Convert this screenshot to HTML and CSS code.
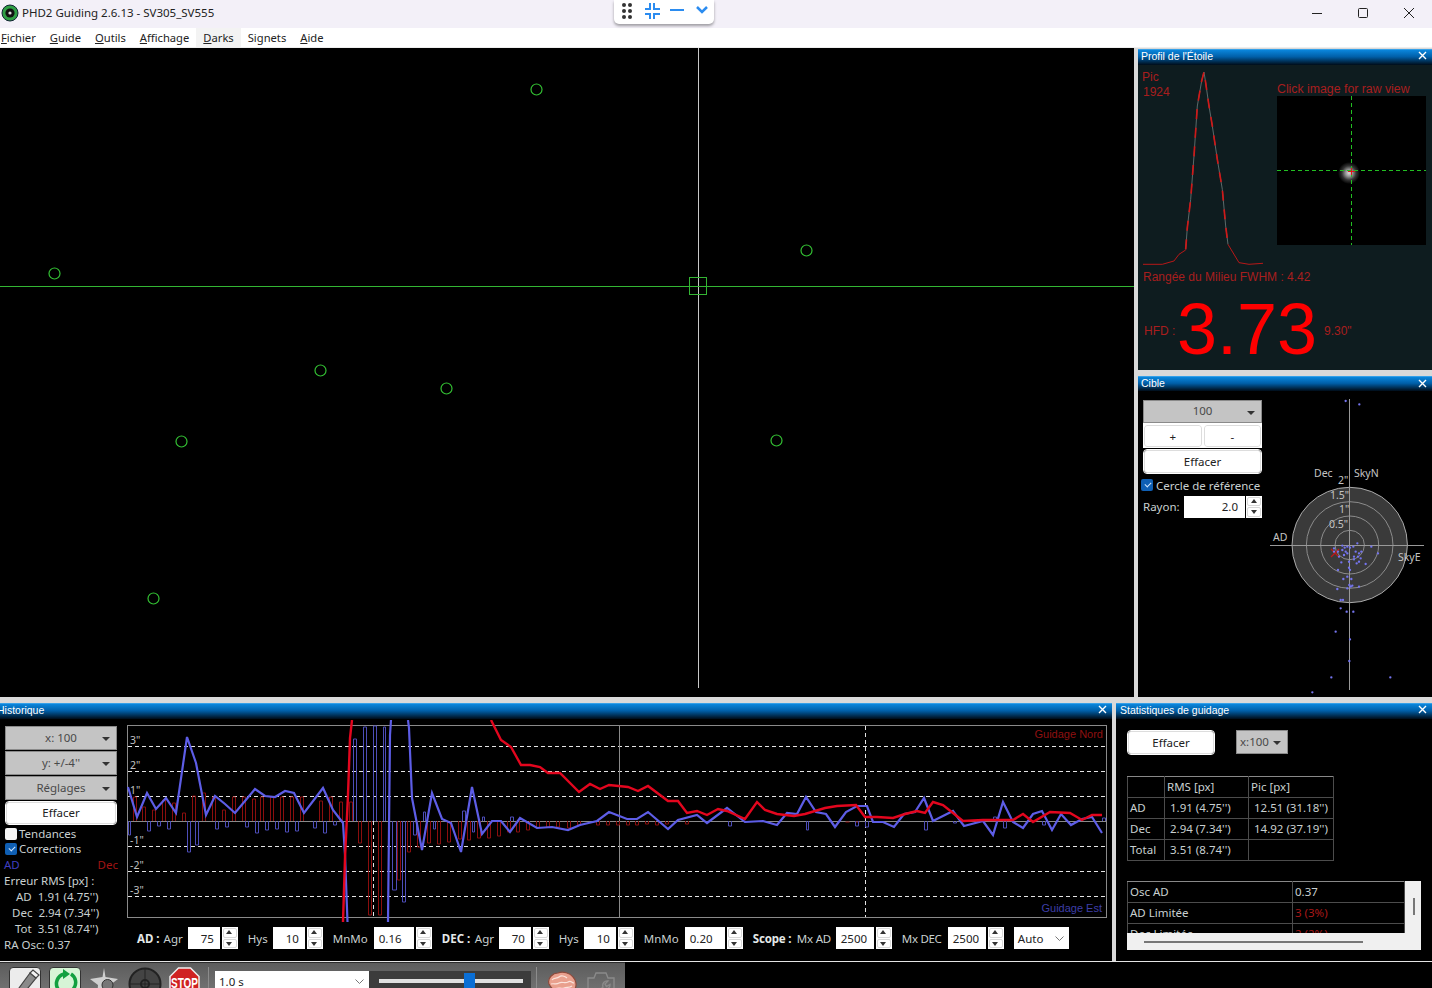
FILE: index.html
```html
<!DOCTYPE html>
<html lang="fr">
<head>
<meta charset="utf-8">
<title>PHD2 Guiding</title>
<link rel="stylesheet" href="styles.css">
</head>
<body>
<div class="app">
  <header class="titlebar">
    <svg class="appicon" viewBox="0 0 18 18" width="18" height="18"><circle cx="9" cy="9" r="8" fill="#2f9e44" stroke="#123" stroke-width="1"/><circle cx="9" cy="9" r="4.6" fill="#111"/><circle cx="9" cy="9" r="1.6" fill="#ddd"/></svg>
    <span class="apptitle">PHD2 Guiding 2.6.13 - SV305_SV555</span>
    <div class="winbtns">
      <svg viewBox="0 0 46 24" width="46" height="24"><path d="M18 12.5h10" stroke="#222" fill="none"/></svg>
      <svg viewBox="0 0 46 24" width="46" height="24"><rect x="18.500" y="7.500" width="9" height="9" rx="1" stroke="#222" fill="none"/></svg>
      <svg viewBox="0 0 46 24" width="46" height="24"><path d="M18 7l10 10M28 7l-10 10" stroke="#222" fill="none"/></svg>
    </div>
    <div class="pill">
      <svg viewBox="614 0 100 24" width="100" height="24">
        <g fill="#333"><circle cx="624" cy="5" r="2"/><circle cx="630" cy="5" r="2"/><circle cx="624" cy="11" r="2"/><circle cx="630" cy="11" r="2"/><circle cx="624" cy="17" r="2"/><circle cx="630" cy="17" r="2"/></g>
        <g stroke="#2b8cf0" stroke-width="2" fill="none"><path d="M645 9h5V3M660 9h-6V3M645 14h5v5M660 14h-6v5"/><path d="M670 10h14"/><path d="M697 7l5 5 5-5" stroke-width="2.500"/></g>
      </svg>
    </div>
  </header>
  <nav class="menubar">
    <span class="mi"><u>F</u>ichier</span><span class="mi"><u>G</u>uide</span><span class="mi"><u>O</u>utils</span><span class="mi"><u>A</u>ffichage</span><span class="mi mi-hover"><u>D</u>arks</span><span class="mi">Signets</span><span class="mi"><u>A</u>ide</span>
  </nav>

  <main class="toprow">
    <div class="viewer">
      <svg class="fill" viewBox="0 48 1134 649">
        <path d="M698.500 48V688" stroke="#c8c8c8" fill="none"/>
        <path d="M0 286.500H1134" stroke="#33b533" fill="none"/>
        <rect x="689.500" y="277.500" width="17" height="17" stroke="#33b533" fill="none"/>
        <g stroke="#33c033" fill="none" stroke-width="1.200">
          <circle cx="536.500" cy="89.500" r="5.500"/><circle cx="806.500" cy="250.500" r="5.500"/><circle cx="54.500" cy="273.500" r="5.500"/><circle cx="320.500" cy="370.500" r="5.500"/><circle cx="446.500" cy="388.500" r="5.500"/><circle cx="181.500" cy="441.500" r="5.500"/><circle cx="776.500" cy="440.500" r="5.500"/><circle cx="153.500" cy="598.500" r="5.500"/>
        </g>
      </svg>
    </div>
    <aside class="rightcol">
      <section class="panel panel-profile">
        <div class="ptitle"><span>Profil de l'Étoile</span><svg class="px" viewBox="0 0 9 9" width="9" height="9"><path d="M1 1l7 7M8 1L1 8" stroke="#fff" stroke-width="1.400"/></svg></div>
        <svg class="fill" viewBox="1138 65 294 305">
          <defs><radialGradient id="star"><stop offset="0" stop-color="#ddd"/><stop offset=".3" stop-color="#999"/><stop offset=".65" stop-color="#333"/><stop offset="1" stop-color="#000"/></radialGradient></defs>
          <g class="redtext">
            <text x="1142" y="81">Pic</text><text x="1143" y="96">1924</text>
            <text class="wide" x="1277" y="93">Click image for raw view</text>
            <text x="1143" y="281">Rangée du Milieu FWHM : 4.42</text>
            <text x="1144" y="335">HFD :</text><text x="1324" y="335">9.30"</text>
          </g>
          <text class="hfd" x="1177" y="354">3.73</text>
          <g transform="translate(1134 46) scale(.3333)" fill="none">
            <polyline stroke="#5a6a6a" stroke-width="3" points="155,610 160,545 170,460 180,330 190,180 203,105 210,78 215,110 225,180 235,240 250,340 265,430 275,540 282,595"/>
            <polyline stroke="#d01818" stroke-width="5" stroke-dasharray="30 26" points="155,610 160,545 170,460 180,330 190,180 203,105 210,78 215,110 225,180 235,240 250,340 265,430 275,540 282,595"/>
            <polyline stroke="#b81818" stroke-width="3" points="27,655 85,655 120,645 135,625 155,612"/>
            <polyline stroke="#b81818" stroke-width="3" points="282,595 315,650 345,655 387,652"/>
          </g>
          <rect x="1277" y="96" width="149" height="149" fill="#000"/>
          <circle cx="1349" cy="173" r="11" fill="url(#star)"/>
          <path d="M1277 170.500H1426M1351.500 96V245" stroke="#22c022" stroke-dasharray="4 3" fill="none"/>
          <path d="M1348 171.500h7M1351.500 168v7" stroke="#e01818" fill="none"/>
        </svg>
      </section>
      <section class="panel panel-target">
        <div class="ptitle"><span>Cible</span><svg class="px" viewBox="0 0 9 9" width="9" height="9"><path d="M1 1l7 7M8 1L1 8" stroke="#fff" stroke-width="1.400"/></svg></div>
        <div class="targetbody">
          <div class="targetside">
            <div class="drop drop-target"><span>100</span><i class="caret"></i></div>
            <div class="btnpair"><button class="btn">+</button><button class="btn">-</button></div>
            <button class="btn btn-clear">Effacer</button>
            <label class="chk chk-ref"><i class="box on"></i>Cercle de référence</label>
            <div class="radius"><span>Rayon:</span><span class="input input-radius">2.0</span><span class="spin spin-wide"><i class="up"></i><i class="dn"></i></span></div>
          </div>
          <svg class="plot" viewBox="1262 391 170 306" width="170" height="306">
            <circle cx="1349.700" cy="545" r="57.700" fill="#3a3a3a" stroke="#aaa"/>
            <g fill="none" stroke="#8c8c8c"><circle cx="1349.700" cy="545" r="43.300"/><circle cx="1349.700" cy="545" r="29"/><circle cx="1349.700" cy="545" r="14.700"/></g>
            <path d="M1270 545.500H1424M1349.500 399V690" stroke="#999" fill="none"/>
            <path d="M1331 549l8 8M1339 549l-8 8" stroke="#c01818" fill="none" stroke-width="1.200"/>
            <g class="plottext">
              <text x="1314" y="477">Dec</text><text x="1354" y="477">SkyN</text>
              <text x="1338" y="484">2"</text><text x="1330" y="499">1.5"</text><text x="1339" y="513">1"</text><text x="1329" y="528">0.5"</text>
              <text x="1273" y="541">AD</text><text x="1398" y="561">SkyE</text>
            </g>
            <g transform="translate(1134 375) scale(.3333)"><path fill="none" stroke="#7474ee" stroke-width="7" stroke-linecap="round" d="M635 78h.1M676 88h.1M620 700h.1M658 710h.1M638 710h.1M605 770h.1M648 793h.1M646 858h.1M592 907h.1M769 907h.1M535 952h.1M620 675h.1M627 675h.1M625 512h.1M632 518h.1M640 515h.1M648 518h.1M658 515h.1M670 505h.1M712 515h.1M600 520h.1M612 530h.1M625 525h.1M635 530h.1M615 545h.1M630 540h.1M640 535h.1M665 530h.1M675 535h.1M682 530h.1M672 545h.1M660 545h.1M680 550h.1M732 535h.1M695 567h.1M668 565h.1M675 560h.1M622 562h.1M645 560h.1M612 585h.1M645 578h.1M648 585h.1M660 553h.1M628 612h.1M640 605h.1M652 612h.1M646 630h.1M650 635h.1M675 635h.1M655 632h.1M640 640h.1M610 642h.1M600 530h.1"/></g>
          </svg>
        </div>
      </section>
    </aside>
  </main>

  <div class="bottomrow">
    <section class="panel panel-history">
      <div class="ptitle ptitle-hist"><span>Historique</span><svg class="px" viewBox="0 0 9 9" width="9" height="9"><path d="M1 1l7 7M8 1L1 8" stroke="#fff" stroke-width="1.400"/></svg></div>
      <div class="histbody">
        <div class="histside">
          <div class="drop"><span>x: 100</span><i class="caret"></i></div>
          <div class="drop"><span>y: +/-4''</span><i class="caret"></i></div>
          <div class="drop"><span>Réglages</span><i class="caret"></i></div>
          <button class="btn btn-hist">Effacer</button>
          <label class="chk"><i class="box"></i>Tendances</label>
          <label class="chk"><i class="box on"></i>Corrections</label>
          <div class="legend"><span class="c-ad">AD</span><span class="c-dec">Dec</span></div>
          <div class="stat">Erreur RMS [px] :</div>
          <div class="stat stat-ad">AD&nbsp; 1.91 (4.75'')</div>
          <div class="stat stat-dec">Dec&nbsp; 2.94 (7.34'')</div>
          <div class="stat stat-tot">Tot&nbsp; 3.51 (8.74'')</div>
          <div class="stat">RA Osc: 0.37</div>
        </div>
        <div class="histmain">
          <svg class="graph" viewBox="127 720 980 202" width="980" height="202">
            <rect x="127.500" y="725.500" width="979" height="192" fill="none" stroke="#8a8a8a"/>
            <path d="M128 746.500H1106M128 771.500H1106M128 796.500H1106M128 846.500H1106M128 871.500H1106M128 896.500H1106" stroke="#e4e4e4" stroke-dasharray="4 3" fill="none"/>
            <path d="M128 821.500H1106" stroke="#8a8a8a" fill="none"/>
            <path d="M619.500 726V917" stroke="#8a8a8a" fill="none"/>
            <path d="M865.500 726V917M373.500 821V917" stroke="#e4e4e4" stroke-dasharray="4 3" fill="none"/>
            <path fill="none" stroke="#8a0e0e" d="M133.500 821V797h3v24M142.500 821V807h3v14M152.500 821V810h3v11M162.500 821V800h3v21M172.500 821V803h3v18M182.500 821V813h3v8M192.500 821V796h3v25M202.500 821V793h3v28M212.500 821V797h3v24M222.500 821V810h3v11M232.500 821V797h3v24M242.500 821V797h3v24M252.500 821V799h3v22M260.500 821V797h3v24M270.500 821V797h3v24M280.500 821V797h3v24M290.500 821V797h3v24M300.500 821V797h3v24M319.500 821V801h3v20M329.500 821V797h3v24M339.500 821V802h3v19M349.500 821V802h3v19M358.500 821V843h3V821M368.500 821V915h3V821M378.500 821V915h3V821M397.500 821V880h3V821M407.500 821V852h3V821M417.500 821V847h3V821M427.500 821V843h3V821M437.500 821V844h3V821M447.500 821V842h3V821M458.500 821V839h3V821M467.500 821V840h3V821M477.500 821V838h3V821M487.500 821V838h3V821M497.500 821V836h3V821M507.500 821V832h3V821M516.500 821V832h3V821M526.500 821V830h3V821M536.500 821V828h3V821M546.500 821V827h3V821M556.500 821V827h3V821M567.500 821V828h3V821M577.500 821V825h3V821M596.500 821V825h3V821M606.500 821V825h3V821M616.500 821V825h3V821M626.500 821V825h3V821M635.500 821V825h3V821M645.500 821V824h3V821M655.500 821V825h3V821M665.500 821V824h3V821M685.500 821V824h3V821M845.500 822h4M855.500 822h4M975.500 822h4"/>
            <path fill="none" stroke="#4d4db8" d="M128.500 821V835h2V821M147.500 821V831h3V821M157.500 821V826h3V821M167.500 821V829h3V821M187.500 821V852h3V821M195.500 821V845h3V821M215.500 821V829h3V821M225.500 821V827h3V821M245.500 821V827h3V821M255.500 821V833h3V821M265.500 821V830h3V821M275.500 821V829h3V821M285.500 821V832h3V821M295.500 821V831h3V821M313.500 821V828h3V821M323.500 821V833h3V821M333.500 821V825h3V821M353.500 821V739h3v82M363.500 821V727h3v94M373.500 821V726h3v95M383.500 821V727h2v94M392.500 821V890h4V821M402.500 821V902h3V821M413.500 821V835h3V821M423.500 821V812h2v9M433.500 821V829h2V821M462.500 821V811h3v10M472.500 821V832h2V821M482.500 821V817h2v4M510.500 821V817h3v4M728.500 821V826h3V821M806.500 821V830h2V821M855.500 821V826h3V821M865.500 821V827h3V821M924.500 821V830h3V821M953.500 821V823h3V821M993.500 821V817h3v4M1003.500 821V828h3V821M1042.500 821V825h3V821M1102.500 821V818h3v3"/>
            <polyline fill="none" stroke="#5d5de6" stroke-width="2.200" points="128,787 137,817 147,793 156,809 166,798 176,813 187,737 196,763 206,815 215,796 225,804 235,813 255,789 265,796 275,797 285,791 294,793 304,813 323,788 333,810 343,823 345,855 347.500,922"/>
            <polyline fill="none" stroke="#5d5de6" stroke-width="2.200" points="388,922 390,735 391,720"/>
            <polyline fill="none" stroke="#5d5de6" stroke-width="2.200" points="408,720 409,728 412,798 422,850 432,793 442,819 451,823 461,852 472,787 482,834 492,821 501,821 510,832 520,818 537,828 552,827 568,830 580,825 597,821 609,812 627,819 637,819 648,812 668,829 678,820 697,815 707,823 727,808 745,822 763,821 777,825 787,813 797,814 806,797 816,812 826,814 835,827 846,812 857,806 867,806 873,822 883,822 894,827 904,814 915,812 924,798 933,821 953,811 964,826 983,821 993,835 1003,802 1013,822 1023,828 1033,814 1042,811 1052,830 1061,814 1071,825 1082,819 1092,817 1102,833"/>
            <polyline fill="none" stroke="#e3061e" stroke-width="2.400" points="352,720 350,738 348,795 345,858 343,922"/>
            <polyline fill="none" stroke="#e3061e" stroke-width="2.400" points="491,720 501,740 511,747 521,765 530,765 540,767 548,773 560,773 579,792 590,784 600,789 609,785 628,787 638,791 648,786 668,801 678,801 687,813 697,811 707,815 718,809 727,811 745,819 757,802 765,810 777,814 794,816 805,814 825,808 837,806 856,805 865,817 877,817 893,818 905,814 917,811 925,813 933,802 943,805 953,813 963,821 983,820 1013,820 1023,814 1033,822 1050,812 1070,813 1082,820 1092,815 1102,815"/>
            <g class="axis">
              <text x="130" y="744">3"</text><text x="130" y="769">2"</text><text x="130" y="794">1"</text><text x="130" y="844">-1"</text><text x="130" y="869">-2"</text><text x="130" y="894">-3"</text>
            </g>
            <text class="gn" x="1103" y="738">Guidage Nord</text>
            <text class="ge" x="1102" y="912">Guidage Est</text>
          </svg>
          <div class="controls">
            <b class="l0">AD :</b><span class="l1">Agr</span>
            <span class="input w32">75</span><span class="spin"><i class="up"></i><i class="dn"></i></span>
            <span class="l2 wHys">Hys</span>
            <span class="input w32">10</span><span class="spin"><i class="up"></i><i class="dn"></i></span>
            <span class="l2 wMn">MnMo</span>
            <span class="input w40 left">0.16</span><span class="spin"><i class="up"></i><i class="dn"></i></span>
            <b class="l2 wDec">DEC :</b><span class="l1 wAgr">Agr</span>
            <span class="input w32">70</span><span class="spin"><i class="up"></i><i class="dn"></i></span>
            <span class="l2 wHys">Hys</span>
            <span class="input w32">10</span><span class="spin"><i class="up"></i><i class="dn"></i></span>
            <span class="l2 wMn">MnMo</span>
            <span class="input w40 left">0.20</span><span class="spin"><i class="up"></i><i class="dn"></i></span>
            <b class="l2 wScope">Scope :</b><span class="l1 wMxAd">Mx AD</span>
            <span class="input w38 left">2500</span><span class="spin"><i class="up"></i><i class="dn"></i></span>
            <span class="l2 wMxDec">Mx DEC</span>
            <span class="input w38 left">2500</span><span class="spin"><i class="up"></i><i class="dn"></i></span>
            <span class="auto">Auto<svg viewBox="0 0 9 5" width="9" height="5"><path d="M.5.5l4 4 4-4" fill="none" stroke="#777"/></svg></span>
          </div>
        </div>
      </div>
    </section>
    <section class="panel panel-stats">
      <div class="ptitle ptitle-stats"><span>Statistiques de guidage</span><svg class="px" viewBox="0 0 9 9" width="9" height="9"><path d="M1 1l7 7M8 1L1 8" stroke="#fff" stroke-width="1.400"/></svg></div>
      <div class="statsbody">
        <div class="statstop">
          <button class="btn btn-stats">Effacer</button>
          <div class="drop drop-stats"><span>x:100</span><i class="caret"></i></div>
        </div>
        <table class="grid grid1">
          <tr><td class="k1"></td><td class="k2">RMS [px]</td><td class="k3">Pic [px]</td></tr>
          <tr><td>AD</td><td class="ind">1.91 (4.75'')</td><td class="ind">12.51 (31.18'')</td></tr>
          <tr><td>Dec</td><td class="ind">2.94 (7.34'')</td><td class="ind">14.92 (37.19'')</td></tr>
          <tr><td>Total</td><td class="ind">3.51 (8.74'')</td><td></td></tr>
        </table>
        <div class="scrollbox">
          <div class="scrollview">
            <table class="grid grid2">
              <tr><td class="k4">Osc AD</td><td class="k5">0.37</td></tr>
              <tr><td>AD Limitée</td><td class="lim">3 (3%)</td></tr>
              <tr><td>Dec Limitée</td><td class="lim">2 (2%)</td></tr>
            </table>
            <div class="vscroll"><i></i></div>
          </div>
          <div class="hscroll"><i></i></div>
        </div>
      </div>
    </section>
  </div>

  <div class="hairline"></div>
  <footer class="toolbar">
    <div class="tool tool-pencil"><svg viewBox="0 0 30 30" width="30" height="30"><path d="M6 29l3-9L20 5l6 5-12 15-8 4z" fill="#8a8a8a" stroke="#444" stroke-width="1.200"/><path d="M20 5l3-3 6 5-3 3z" fill="#f4f4f4" stroke="#444" stroke-width="1.200"/></svg></div>
    <div class="tool tool-loop"><svg viewBox="0 0 30 30" width="30" height="30"><path d="M8 21a10 10 0 0 1 6-15" fill="none" stroke="#12a040" stroke-width="3.500"/><path d="M21 6a10 10 0 0 1 3 14 10 10 0 0 1-13 4" fill="none" stroke="#12a040" stroke-width="3.500"/><path d="M13 1l7 5-7 5z" fill="#12a040"/></svg></div>
    <svg class="ticon ticon-star" viewBox="0 0 28 30" width="28" height="30"><path d="M14 0l1.500 9L28 11l-8 6 1 13-7-8-7 8 1-13-8-6 12.500-2z" fill="#cfcfcf"/><circle cx="17.500" cy="17" r="5.500" fill="#777" stroke="#333"/></svg>
    <svg class="ticon ticon-scope" viewBox="0 0 34 34" width="34" height="34"><circle cx="17" cy="17" r="15.500" fill="#444" stroke="#222" stroke-width="2"/><path d="M17 2v30M2 17h30" stroke="#222"/><circle cx="17" cy="17" r="4" fill="none" stroke="#222" stroke-width="2"/></svg>
    <svg class="ticon ticon-stop" viewBox="0 0 31 32" width="31" height="32"><path d="M9.500 1h12L30 9.500v13L21.500 31h-12L1 22.500v-13z" fill="#d02222" stroke="#eee" stroke-width="1.500"/><text class="stoptext" x="15.500" y="21" textLength="27" lengthAdjust="spacingAndGlyphs">STOP</text></svg>
    <i class="tsep"></i>
    <div class="exposure"><span>1.0 s</span><svg viewBox="0 0 9 5" width="9" height="5"><path d="M.5.5l4 4 4-4" fill="none" stroke="#777"/></svg></div>
    <div class="slider"><i class="track"></i><i class="thumb"></i></div>
    <i class="tsep tsep2"></i>
    <svg class="ticon ticon-brain" viewBox="0 0 30 24" width="30" height="24">
      <path d="M2 13C0 7 6 2 11 2c5-2 12 0 15 4 3 3 4 8 2 12-2 3-6 2-8 4-3-3-12-2-14-4-2-1-3-3-4-5z" fill="#e9a08e" stroke="#8d4a3c" stroke-width="1.200"/>
      <path d="M5 9c2-3 5-1 7-3s6-1 8 1M4 13c3-1 5 1 8-1s6 1 9-1 4 1 6 1M8 18c3-2 6 0 9-1s5 0 8-2" fill="none" stroke="#fbe3dc" stroke-width="1.200"/>
    </svg>
    <svg class="ticon ticon-cam" viewBox="0 0 28 26" width="28" height="26"><path d="M1 6h6l2-5h10l2 5h6v20H1z" fill="none" stroke="#8a8a8a" stroke-width="1.400"/><path d="M9 22l7-7a4.500 4.500 0 0 1 5-6l-3 3 1.500 2.500 3.500-2a4.500 4.500 0 0 1-6 4.500l-5 7" fill="none" stroke="#8a8a8a" stroke-width="1.400"/></svg>
  </footer>
</div>
</body>
</html>
```
FILE: styles.css
```css
* { box-sizing: border-box; }
html, body { margin: 0; padding: 0; background: #000; }
body { overflow: hidden; }
.app { width: 1432px; height: 988px; display: flex; flex-direction: column; overflow: hidden; position: relative; font: 11.5px "Noto Sans", "Open Sans", sans-serif; color: #c9d0d0; }
.fill { display: block; width: 100%; flex: 1; min-height: 0; }

.titlebar { height: 28px; flex: none; background: #f3f0f8; display: flex; align-items: center; padding: 0 0 3px 1px; color: #222; }
.appicon { margin-right: 3px; }
.apptitle { font-size: 11.5px; }
.winbtns { margin-left: auto; display: flex; }
.pill { position: absolute; left: 614px; top: 0; width: 100px; height: 24px; background: #fff; border-radius: 0 0 5px 5px; box-shadow: 0 2px 3px rgba(0,0,0,.35); }
.pill svg { display: block; }

.menubar { height: 20px; flex: none; background: #fff; border-bottom: 1px solid #eee; display: flex; align-items: center; color: #222; font-size: 11.2px; padding-left: 1px; gap: 14px; }
.mi { line-height: 19px; position: relative; white-space: nowrap; }
.mi-hover { background: #f3f3f3; box-shadow: -7px 0 0 #f3f3f3, 7px 0 0 #f3f3f3; }

.toprow { height: 652px; flex: none; display: flex; background: #d9d9d9; }
.viewer { width: 1134px; height: 649px; background: #000; display: flex; }
.rightcol { width: 298px; display: flex; flex-direction: column; gap: 6px; padding: 1px 0 3px 4px; }
.panel { display: flex; flex-direction: column; min-height: 0; }
.panel-profile { height: 321px; background: #0e1c1f; }
.panel-target { height: 321px; background: #000; }
.panel-target .ptitle { height: 15px; padding-bottom: 2px; }
.ptitle { height: 16px; flex: none; padding: 0 5px 4px 3px; display: flex; justify-content: space-between; align-items: center; color: #fff; font: 10.5px "Liberation Sans", Arial, sans-serif; background: linear-gradient(#0a86dc, #005fa8 45%, #000c18); border-top: 1px solid #35a0e8; }
.ptitle-hist { padding-left: 0; padding-right: 5px; }
.ptitle-hist span { margin-left: -3px; }
.ptitle-stats { padding-left: 4px; }
.px { flex: none; }

.redtext text { font: 12px "Liberation Sans", Arial, sans-serif; fill: #a81e1e; }
.redtext .wide { font-size: 12.300px; }
.hfd { font: 72px "Liberation Sans", Arial, sans-serif; fill: #ff0000; }

.drop { height: 24px; background: #c4c4c4; border: 1px solid #8a8a8a; display: flex; align-items: center; justify-content: center; position: relative; color: #4a4a4a; font-size: 11.5px; padding-bottom: 2px; }
.caret { position: absolute; right: 6px; top: 10px; width: 0; height: 0; border: 4px solid transparent; border-top: 4px solid #333; border-bottom: 0; }
.btn { font: 11.5px "Noto Sans", "Open Sans", sans-serif; color: #222; background: #fff; border: 1px solid #ddd; border-radius: 3px; padding: 0; outline: 1px solid #fff; }

.targetbody { flex: 1; display: flex; min-height: 0; }
.targetside { width: 124px; padding: 9px 0 0 5px; flex: none; display: flex; flex-direction: column; }
.drop-target { width: 119px; height: 23px; }
.btnpair { display: flex; gap: 2px; width: 119px; background: #fff; padding: 2px 1px 1px; height: 25px; }
.btnpair .btn { flex: 1; }
.btn-clear { width: 117px; height: 23px; margin: 2px 0 0 1px; flex: none; }
.chk { display: flex; align-items: center; gap: 3px; height: 15px; white-space: nowrap; }
.chk-ref { margin: 3px 0 0 -2px; height: 18px; color: #c9d0d0; }
.box { width: 12px; height: 12px; background: #f4f4f4; border-radius: 2px; display: block; flex: none; position: relative; }
.box.on { background: #0f5fb4; }
.box.on::after { content: ""; position: absolute; left: 3.500px; top: 3px; width: 5px; height: 3px; border-left: 1px solid #cfe6ff; border-bottom: 1px solid #cfe6ff; transform: rotate(-45deg); }
.radius { display: flex; align-items: center; margin-top: 1px; height: 23px; }
.radius > span:first-child { width: 41px; flex: none; }
.input { display: flex; align-items: center; justify-content: flex-end; height: 22px; background: #fff; color: #222; padding-right: 6px; font-size: 11.5px; flex: none; }
.input-radius { width: 61px; margin-right: 1px; padding-right: 7px; }
.spin { width: 16px; height: 22px; background: #fff; flex: none; display: flex; flex-direction: column; gap: 1px; padding: 1px; margin-left: 2px; }
.spin-wide { margin-left: 0; }
.spin i { flex: 1; border: 1px solid #d8d8d8; border-radius: 2px; position: relative; display: block; }
.spin i::after { content: ""; position: absolute; left: 2.500px; width: 0; height: 0; border: 4px solid transparent; border-left-width: 3.500px; border-right-width: 3.500px; }
.spin .up::after { top: 1px; border-bottom: 4px solid #333; border-top: 0; }
.spin .dn::after { top: 2px; border-top: 4px solid #333; border-bottom: 0; }
.plot { display: block; flex: none; }
.plottext text { font: 10.5px "Noto Sans", sans-serif; fill: #c4c4c4; }

.bottomrow { height: 261px; flex: none; display: flex; background: #d9d9d9; padding-top: 3px; }
.panel-history { width: 1112px; background: #000; }
.panel-stats { width: 316px; margin-left: 4px; background: #000; }
.histbody { display: flex; flex: 1; min-height: 0; }
.histside { width: 127px; flex: none; padding: 7px 0 0 5px; display: flex; flex-direction: column; }
.histside .drop { width: 112px; height: 24px; margin-bottom: 1px; }
.btn-hist { width: 110px; height: 22px; margin: 1px 0 2px 1px; flex: none; padding-bottom: 2px; }
.histside .chk { gap: 2px; }
.legend { width: 113px; display: flex; justify-content: space-between; height: 17px; align-items: center; }
.c-ad { color: #3f3fc0; margin-left: -1px; }
.c-dec { color: #a01414; }
.stat { height: 16px; line-height: 16px; white-space: nowrap; flex: none; margin-left: -1px; }
.stat-ad { padding-left: 12px; }
.stat-dec { padding-left: 8px; }
.stat-tot { padding-left: 11px; }
.histmain { flex: 1; min-width: 0; padding-top: 1px; }
.graph { display: block; }
.axis text { font: 10.5px "Noto Sans", sans-serif; fill: #c0c0c0; }
.gn { font: 11px "Liberation Sans", sans-serif; fill: #8f1010; text-anchor: end; }
.ge { font: 11px "Liberation Sans", sans-serif; fill: #3e3ea8; text-anchor: end; }
.controls { display: flex; align-items: center; height: 22px; margin-top: 5px; padding-left: 10px; white-space: nowrap; }
.controls b { font-weight: 700; color: #e4e8e8; }
.l0 { margin-right: 4px; }
.l1 { margin-right: 5px; }
.l2 { margin-left: 10px; margin-right: 5px; }
.wHys { width: 20px; }
.wMn { width: 36px; }
.wDec { width: 29px; margin-right: 4px; }
.wAgr { width: 19px; }
.wScope { width: 40px; margin-right: 4px; letter-spacing: -.2px; }
.wMxAd { width: 34px; letter-spacing: -.2px; }
.wMxDec { width: 41px; letter-spacing: -.3px; }
.w32 { width: 32px; }
.w40 { width: 40px; }
.w38 { width: 38px; }
.input.left { justify-content: flex-start; padding: 0 0 0 5px; }
.auto { margin-left: 10px; width: 55px; height: 22px; background: #fff; color: #222; display: flex; align-items: center; justify-content: space-between; padding: 0 5px 0 4px; }

.statsbody { flex: 1; padding: 11px 0 0 11px; min-height: 0; display: flex; flex-direction: column; }
.statstop { display: flex; align-items: flex-start; gap: 22px; height: 25px; }
.btn-stats { width: 86px; height: 23px; margin: 1px 0 0 1px; }
.drop-stats { width: 52px; justify-content: flex-start; padding-left: 3px; }
.grid { border-collapse: collapse; table-layout: fixed; }
.grid tr { height: 21px; }
.grid td { border: 1px solid #4c4c4c; height: 21px; line-height: 15px; padding: 0 0 2px 2px; font-size: 11.5px; white-space: nowrap; }
.grid1 { width: 206px; margin-top: 21px; }
.grid1 tr:first-child td { border-top-color: #888; }
.grid .ind { padding-left: 5px; }
.k1 { width: 37px; } .k2 { width: 84px; } .k3 { width: 85px; }
.scrollbox { margin-top: 20px; width: 294px; background: #f0f0f0; flex: none; }
.scrollview { height: 52px; display: flex; overflow: hidden; }
.grid2 { width: 277px; flex: none; background: #000; align-self: flex-start; }
.grid2 tr:first-child td { border-top-color: #888; }
.k4 { width: 165px; } .k5 { width: 112px; }
.grid .lim { color: #a81818; }
.vscroll { flex: 1; position: relative; }
.vscroll i { position: absolute; left: 8px; top: 17px; width: 2px; height: 17px; background: #777; }
.hscroll { height: 17px; position: relative; }
.hscroll i { position: absolute; left: 17px; top: 8px; width: 219px; height: 2px; background: #777; }

.hairline { height: 1px; flex: none; background: #e4e4e4; }
.toolbar { height: 26px; flex: none; width: 625px; background: linear-gradient(#5c5c5c, #707070); border-top: 1px solid #2a2a2a; display: flex; align-items: flex-start; overflow: hidden; padding: 4px 0 0 9px; }
.tool { width: 32px; height: 32px; border: 1px solid #333; border-radius: 4px; flex: none; display: flex; align-items: center; justify-content: center; }
.tool-pencil { background: #ececec; }
.tool-loop { background: #d6f5d6; margin-left: 8px; }
.ticon { display: block; flex: none; }
.ticon-star { margin: 1px 0 0 9px; }
.ticon-scope { margin: 0 0 0 10px; }
.ticon-stop { margin: 0 0 0 7px; }
.stoptext { font: 700 14px "Liberation Sans", sans-serif; fill: #fff; text-anchor: middle; }
.tsep { width: 1px; height: 26px; background: #8c8c8c; margin: 0 6px 0 8px; flex: none; }
.exposure { width: 154px; height: 26px; margin-top: 4px; background: #fff; color: #222; display: flex; justify-content: space-between; padding: 3px 5px 0 4px; flex: none; align-items: flex-start; }
.exposure svg { margin-top: 5px; }
.slider { width: 162px; height: 26px; margin-top: 4px; background: #3c3c3c; position: relative; flex: none; }
.track { position: absolute; left: 10px; right: 8px; top: 8px; height: 4px; background: #e0e0e0; }
.thumb { position: absolute; left: 95px; top: 2px; width: 11px; height: 24px; background: #0a6fd6; }
.tsep2 { margin: 0 10px 0 5px; }
.ticon-brain { margin-top: 4px; }
.ticon-cam { margin: 5px 0 0 10px; }
```
